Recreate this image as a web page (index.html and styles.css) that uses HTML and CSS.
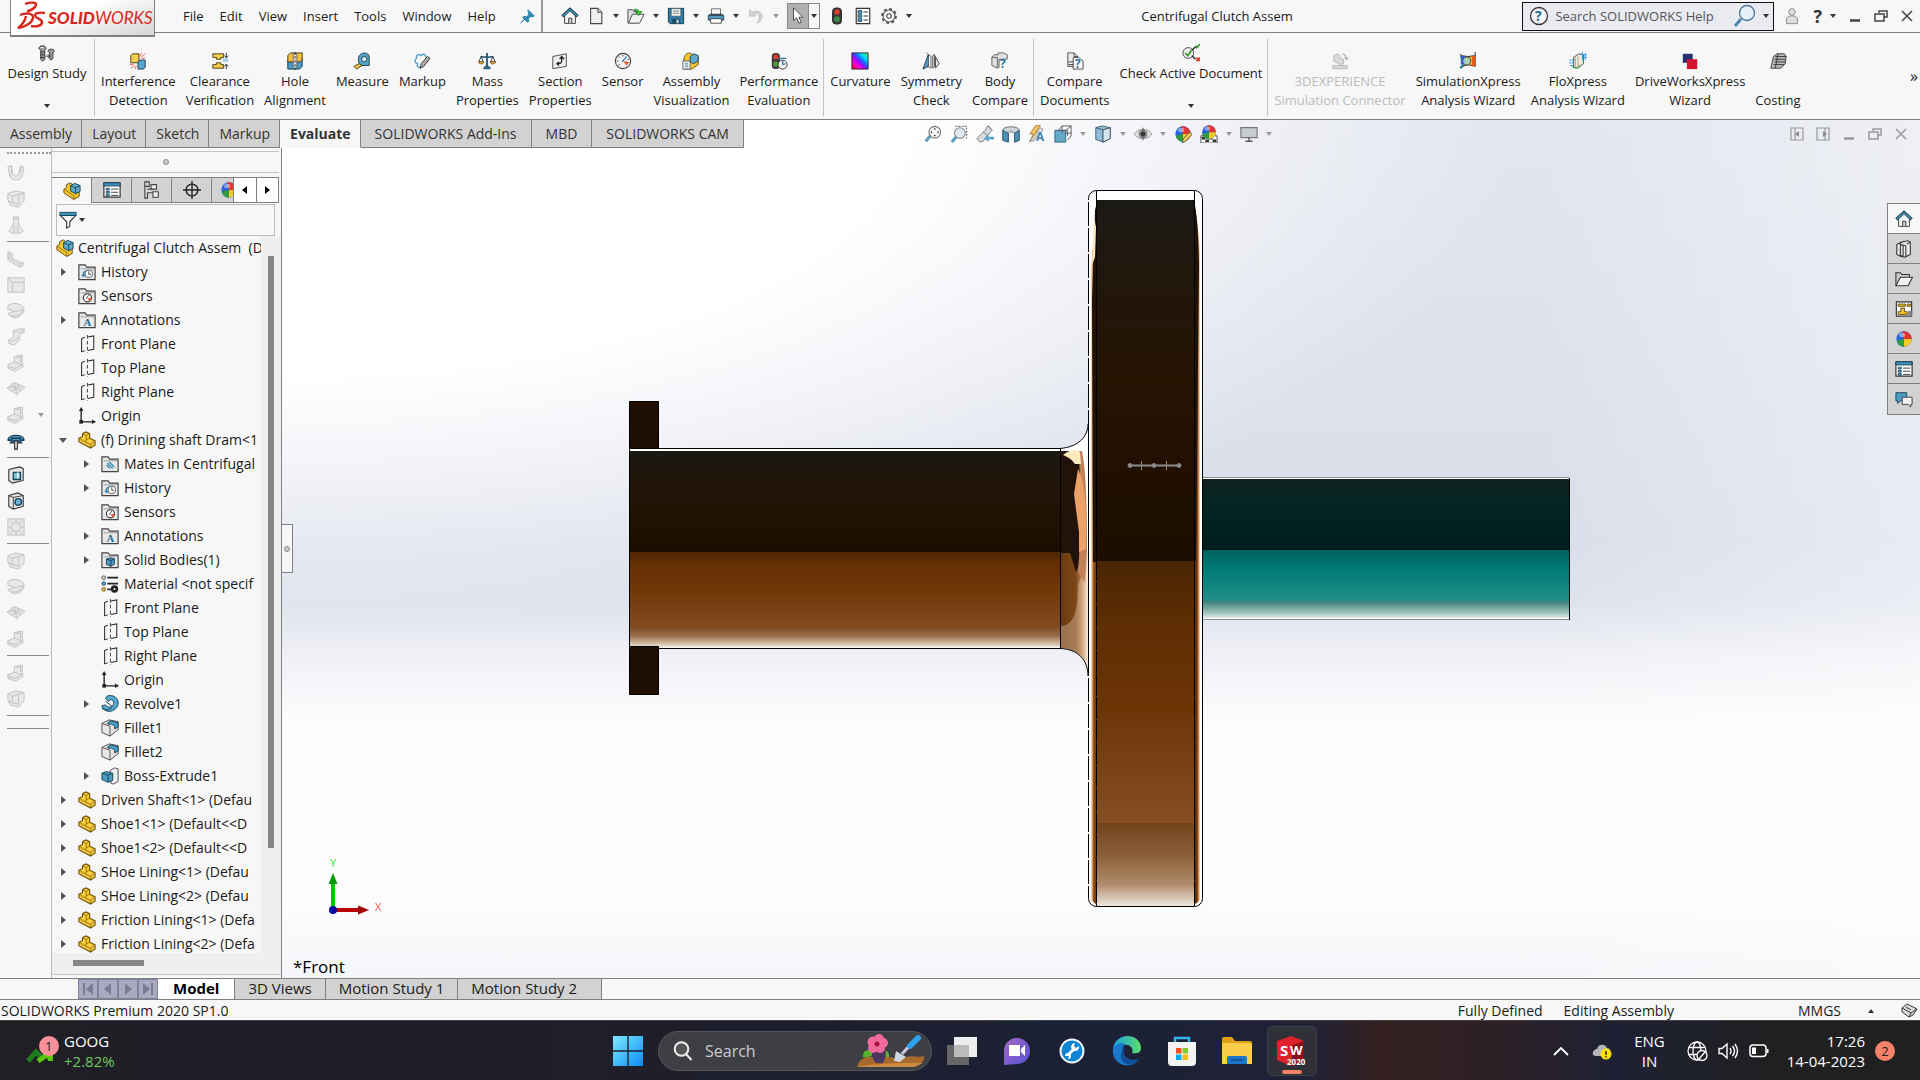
FILE: index.html
```html
<!DOCTYPE html>
<html lang="en">
<head>
    <meta charset="UTF-8">
    <title>Centrifugal Clutch Assem</title>
    <link rel="stylesheet" href="styles.css">
</head>
<body>
<!-- icon sprite -->
<svg class="sprite" aria-hidden="true">
    <defs>
        <linearGradient id="shaft" x1="0" y1="0" x2="0" y2="1">
            <stop offset="0" stop-color="#1b1814"/><stop offset=".2" stop-color="#231507"/><stop offset=".515" stop-color="#1d0d00"/>
            <stop offset=".515" stop-color="#502804"/><stop offset=".58" stop-color="#663004"/><stop offset=".7" stop-color="#703808"/><stop offset=".886" stop-color="#804a1d"/>
            <stop offset=".886" stop-color="#784820"/><stop offset=".94" stop-color="#9a6f4c"/><stop offset=".99" stop-color="#e8d8c8"/><stop offset="1" stop-color="#fff"/>
        </linearGradient>
        <linearGradient id="drum" x1="0" y1="0" x2="0" y2="1">
            <stop offset="0" stop-color="#1a1916"/><stop offset=".1" stop-color="#21170c"/><stop offset=".25" stop-color="#261403"/><stop offset=".512" stop-color="#1c0d00"/>
            <stop offset=".512" stop-color="#4a2605"/><stop offset=".6" stop-color="#5e2d03"/><stop offset=".72" stop-color="#6c3506"/><stop offset=".883" stop-color="#854f23"/>
            <stop offset=".883" stop-color="#71441c"/><stop offset=".93" stop-color="#8c6039"/><stop offset=".97" stop-color="#b08d6d"/><stop offset="1" stop-color="#f0e8df"/>
        </linearGradient>
        <linearGradient id="teal" x1="0" y1="0" x2="0" y2="1">
            <stop offset="0" stop-color="#10201f"/><stop offset=".15" stop-color="#032624"/><stop offset=".51" stop-color="#001d1d"/>
            <stop offset=".51" stop-color="#00625f"/><stop offset=".65" stop-color="#007a76"/><stop offset=".88" stop-color="#239088"/>
            <stop offset=".88" stop-color="#398078"/><stop offset=".96" stop-color="#9dc0ba"/><stop offset="1" stop-color="#dfe9e5"/>
        </linearGradient>
        <linearGradient id="rimL" x1="0" y1="0" x2="1" y2="0">
            <stop offset="0" stop-color="#fff"/><stop offset=".2" stop-color="#fff"/><stop offset=".4" stop-color="#e9a56c"/><stop offset=".6" stop-color="#8a4e1e"/><stop offset="1" stop-color="#5e3008"/>
        </linearGradient>
        <linearGradient id="rimR" x1="1" y1="0" x2="0" y2="0">
            <stop offset="0" stop-color="#fff"/><stop offset=".2" stop-color="#fff"/><stop offset=".4" stop-color="#e99a5b"/><stop offset=".6" stop-color="#6a3a12"/><stop offset="1" stop-color="#4a2808"/>
        </linearGradient>
        <linearGradient id="neck" x1="0" y1="0" x2="1" y2="0">
            <stop offset="0" stop-color="#6b3a10"/><stop offset=".55" stop-color="#7d4718"/><stop offset=".8" stop-color="#c08d62"/><stop offset="1" stop-color="#fff4e6"/>
        </linearGradient>
        <linearGradient id="winBlue" x1="0" y1="0" x2="1" y2="1">
            <stop offset="0" stop-color="#7fe9ff"/><stop offset="1" stop-color="#0a8cf5"/>
        </linearGradient>
        <linearGradient id="chatG" x1="0" y1="0" x2="1" y2="1">
            <stop offset="0" stop-color="#a667c0"/><stop offset="1" stop-color="#5453d6"/>
        </linearGradient>
        <linearGradient id="edgeG" x1="0" y1="0" x2="1" y2="0">
            <stop offset="0" stop-color="#1c9ce4"/><stop offset="1" stop-color="#5be06a"/>
        </linearGradient>
        <linearGradient id="rainbow" x1="1" y1="0" x2="0" y2="1">
            <stop offset="0" stop-color="#5e4"/><stop offset=".25" stop-color="#0df"/><stop offset=".42" stop-color="#16f"/><stop offset=".58" stop-color="#a0f"/><stop offset=".75" stop-color="#f0c"/><stop offset="1" stop-color="#f00"/>
        </linearGradient>
    </defs>
    <symbol id="i-home" viewBox="0 0 20 20"><path d="M4 9v9.200h12V9l-6-5.500z" fill="#f4f4f4" stroke="#333"/><path d="M8.500 18v-5.500h3.500V18" fill="#ccc" stroke="#333"/><path d="M1.500 10.500L10 2.500l8.500 8" fill="none" stroke="#173b50" stroke-width="3.400"/><path d="M2 10L10 2.800l8 7.200" fill="none" stroke="#4b9cc4" stroke-width="1.400"/></symbol>
    <symbol id="i-new" viewBox="0 0 20 20"><path d="M4 1.500h8l4.500 4.500v12.500H4z" fill="#eee" stroke="#444" stroke-width="1.200"/><path d="M12 1.500V6h4.500" fill="#ccc" stroke="#444"/></symbol>
    <symbol id="i-open" viewBox="0 0 20 20"><path d="M1 17.500V3h5l1.500 2H11v12.500z" fill="#ddd" stroke="#444"/><path d="M1.500 18L6 8h13l-5 10z" fill="#f0f0f0" stroke="#444"/><path d="M8 2.500c3 0 5 .5 6 2.500h2.500L13 9.500 9.500 5.500H12C11 4.500 10 4 8 4z" fill="#3c3" stroke="#176a17" stroke-width=".7"/></symbol>
    <symbol id="i-save" viewBox="0 0 20 20"><path d="M1.500 1.500h17v17h-15l-2-2z" fill="#2d7ba5" stroke="#15384c"/><path d="M5 2h10v8H5z" fill="#f4f4f4" stroke="#777" stroke-width=".6"/><path d="M6.500 4.500h7M6.500 7h7" stroke="#777"/><path d="M6 13h8v5.500H6z" fill="#1c4963"/><path d="M10.500 14h2.500v4h-2.500z" fill="#ccc"/></symbol>
    <symbol id="i-print" viewBox="0 0 20 20"><path d="M5 2h10v7H5z" fill="#f6f6f6" stroke="#666"/><path d="M1.500 9h17v5.500h-17z" fill="#4f9ac0" stroke="#1b3b4d"/><path d="M3 7.500h14v2H3z" fill="#3b4347"/><path d="M4 13h12v5H4z" fill="#fff" stroke="#444"/></symbol>
    <symbol id="i-undo" viewBox="0 0 20 20"><path d="M3 3v7h7L7.500 7.500c4-1.500 7 .5 6 6-.3 1.500-.8 3-2.500 4.500 5-2.500 7-7 5-10.500-2-3-6.500-3.500-10.500-1.500z" fill="#d4d4d4" stroke="#bbb"/></symbol>
    <symbol id="i-cursor" viewBox="0 0 20 20"><path d="M5 1v14l3.500-3 2.500 6 2.500-1.200-2.500-5.500h4.500z" fill="#fff" stroke="#444"/></symbol>
    <symbol id="i-light" viewBox="0 0 20 20"><rect x="5" y="1" width="10" height="18" rx="4" fill="#3a3a3a" stroke="#222"/><circle cx="10" cy="5.500" r="3" fill="#e43a2c"/><circle cx="10" cy="13.500" r="3.200" fill="#3a8c3f"/></symbol>
    <symbol id="i-list" viewBox="0 0 20 20"><path d="M2.500 1.500h15v17h-15z" fill="#fff" stroke="#333" stroke-width="1.300"/><path d="M4.500 4h4v3h-4zM4.500 8.500h4v3h-4zM4.500 13h4v3h-4z" fill="#4b9cc4" stroke="#174056" stroke-width=".9"/><path d="M10.500 5.500h5M10.500 10h5M10.500 14.500h5" stroke="#333" stroke-width="1.200"/></symbol>
    <symbol id="i-gear" viewBox="0 0 20 20"><circle cx="10" cy="10" r="7.800" fill="none" stroke="#555" stroke-width="2" stroke-dasharray="3.200 2.926"/><circle cx="10" cy="10" r="6.600" fill="#f7f7f7" stroke="#555" stroke-width="1.200"/><circle cx="10" cy="10" r="2.500" fill="#fff" stroke="#444" stroke-width="1.200"/></symbol>
    <symbol id="i-pin" viewBox="0 0 20 20"><path d="M10 3l7 7-2 1-2-.5-2.500 2.500.5 3-1.500 1L4 11.500l1.500-1 3 .3L11 8l-.8-2.500zM6 13.500L2 18z" fill="#2f86b3" stroke="#2f86b3"/></symbol>
    <symbol id="i-study" viewBox="0 0 20 20"><path d="M1 5c0-4 8-4 8 0L7.500 7v10L5 19l-2-2V7zM11 8c0-3 7-3 7 0l-1.500 2v6l-2 2-1.500-2v-6z" fill="#9a9a9a" stroke="#2d2d2d"/><path d="M3 9h4M3 12h4M3 15h4M8.500 13.500h4M11 11.500l2 2-2 2" stroke="#2d2d2d" fill="none"/><path d="M3 4h3" stroke="#fff"/></symbol>
    <symbol id="i-interf" viewBox="0 0 20 20"><path d="M2 4l2-2h7v8l-2 2H2z" fill="#f5cf4c" stroke="#3f3310"/><path d="M10 11l2-2h6v8l-2 2h-6z" fill="#58a6d0" stroke="#15384c"/><path d="M12 5l2-4M13 6l5-4M14 7.500l4-1M1 14l4-.5M2 18l4-3M7 19l1-4" stroke="#f0563b"/></symbol>
    <symbol id="i-clear" viewBox="0 0 20 20"><path d="M2 2h12v4h-3v2H6V6H2zM2 18h12v-4h-3v-2H6v2H2z" fill="#f5cf4c" stroke="#3f3310"/><path d="M13 10h6M13 8h6" stroke="#58a6d0"/><path d="M17 1v5M15 4l2 2.500L19 4M17 19v-5M15 16l2-2.500 2 2.500" stroke="#222" fill="none"/></symbol>
    <symbol id="i-hole" viewBox="0 0 20 20"><path d="M2 9l3-2h13v9l-3 3H2z" fill="#4a9bc5" stroke="#15384c"/><path d="M2 4l3-3h13v8l-3 2H2z" fill="#f2c23c" stroke="#3f3310"/><path d="M8 2h4v16H8z" fill="#eee" stroke="#444" stroke-width=".8"/><path d="M10 0v20" stroke="#222" stroke-dasharray="3 1.500"/></symbol>
    <symbol id="i-tape" viewBox="0 0 20 20"><path d="M7 4c3-4 10-4 11 1v10H9c-3-2-4-7-2-11z" fill="#59a3c8" stroke="#15384c"/><circle cx="12.500" cy="8" r="3" fill="#d6e7ef" stroke="#15384c"/><path d="M1 16l6-3 3 2-6 4z" fill="#f3c740" stroke="#3f3310"/></symbol>
    <symbol id="i-markup" viewBox="0 0 20 20"><path d="M9 17c-3 1-5-1-4-4-3-1-4-4-1-6-1-4 3-5 5-3 2-3 6-1 5 2" fill="none" stroke="#4a9bc5" stroke-width="1.500"/><path d="M8 18l1-5 7-8 3 2-7 9z" fill="#aaa" stroke="#333"/></symbol>
    <symbol id="i-mass" viewBox="0 0 20 20"><path d="M10 1v15M3 5c4 1 10 1 14 0" stroke="#1d5674" stroke-width="2" fill="none"/><path d="M3.500 5L1 11h5zM16.500 5L14 11h5z" fill="none" stroke="#333"/><path d="M.5 11h6c0 3-6 3-6 0zM13.500 11h6c0 3-6 3-6 0z" fill="#f3b73e" stroke="#5a3f10" stroke-width=".7"/><path d="M6.500 18.500h7c0-4-7-4-7 0z" fill="#2b7ba5" stroke="#15384c"/></symbol>
    <symbol id="i-section" viewBox="0 0 20 20"><path d="M2 5l15-3v14L2 18.500z" fill="#eee" stroke="#444"/><path d="M7 13c5 0 5-1 5-7M9.500 8L12 5l2.500 3M9 11l-2.500 2L9 15" stroke="#222" fill="none" stroke-width="1.400"/></symbol>
    <symbol id="i-sensor" viewBox="0 0 20 20"><circle cx="10" cy="10" r="8.500" fill="#f4f4f4" stroke="#444" stroke-width="1.200"/><path d="M10 3v2M3 10h2M5 5l1.500 1.500M5 15l1.500-1.500M17 8l-2 .5" stroke="#444"/><path d="M9 11l5-6" stroke="#3a8fbb" stroke-width="1.600"/><path d="M10 10l7 1-3 4z" fill="#e53"/></symbol>
    <symbol id="i-asm" viewBox="0 0 20 20"><path d="M1 8l3-2V3l4-2 3 2v6l7 2v5l-6 3.500L1 12z" fill="#f5c72f" stroke="#5c4609"/><path d="M1 8l11 7v4" fill="none" stroke="#8a6a10"/><path d="M8.500 4l4.500-2.500L19 4v6.500L14 13l-5.500-3z" fill="#5fa9cf" stroke="#163f55"/><path d="M8.500 4L14 6.500 19 4M14 6.500V13" fill="none" stroke="#163f55"/></symbol>
    <symbol id="i-part" viewBox="0 0 20 20"><path d="M1 8l4-2V3l4-2 4 2v5l6 3v4.500l-5 3.500L1 12z" fill="#f7ce3c" stroke="#6b500b" stroke-width="1.200"/><path d="M1.500 8.500L9 12.500l5 2.500 4.500-3.500M14 15v4M5 3.200L9 5l4-2M9 5v5l4-2M9 10v2" fill="none" stroke="#8f6d12"/></symbol>
    <symbol id="i-asmvis" viewBox="0 0 20 20"><path d="M3 5c1-4 7-5 9-2l6 3v8l-7 5H2V8z" fill="#f5c72f" stroke="#5c4609"/><path d="M9 5l4-3 5 2v6l-5 3-4-2z" fill="#5fa9cf" stroke="#163f55"/><path d="M1 10h8v9H1z" fill="#fff" stroke="#555"/><path d="M3 12.500h4M3 14.500h4M3 16.500h4" stroke="#47a"/></symbol>
    <symbol id="i-perf" viewBox="0 0 20 20"><rect x="2" y="1" width="9" height="18" rx="4" fill="#3a3a3a"/><circle cx="6.500" cy="5.500" r="2.800" fill="#e43a2c"/><circle cx="6.500" cy="13.500" r="3" fill="#4d9b3f"/><circle cx="14" cy="14" r="5" fill="#f2f2f2" stroke="#333"/><path d="M14 14V9.500M14 14l3-1M9 7h9" stroke="#2b7ba5" stroke-width="1.400"/></symbol>
    <symbol id="i-curv" viewBox="0 0 20 20"><path d="M1 1h18v18H1z" fill="url(#rainbow)" stroke="#222"/></symbol>
    <symbol id="i-symm" viewBox="0 0 20 20"><path d="M1 19L7 3v13z" fill="#58a6d0" stroke="#15384c"/><path d="M5 1l5 4v13l-5-3" fill="none" stroke="#555"/><path d="M12 4v14l2-2V3zM15 5l4 8-4 5z" fill="#e4e4e4" stroke="#444"/></symbol>
    <symbol id="i-check" viewBox="0 0 20 20"><circle cx="7" cy="10" r="6" fill="#eee" stroke="#444"/><path d="M3.500 10l3 3 4-6M15 2l1.500 2L20 0" stroke="#2c9b22" stroke-width="1.800" fill="none"/><path d="M11 7l4-4M11 13l4 4" stroke="#222" stroke-width="1.500"/><path d="M16 15l4 4M20 15l-4 4" stroke="#d8301e" stroke-width="1.800"/></symbol>
    <symbol id="i-3dx" viewBox="0 0 20 20"><path d="M2 15h16v3.500H2zM3 4l4-2 3 2v3l4 1v5l-4 1-7-4z" fill="#d9d9d9" stroke="#b9b9b9"/><path d="M12 2c4 0 5 2 5 6M15 6l2 2.500L19 6" fill="none" stroke="#b9b9b9" stroke-width="1.500"/></symbol>
    <symbol id="i-simx" viewBox="0 0 20 20"><path d="M2 4l8 1 8-1v12l-8-2-6 2z" fill="#ffd21c" stroke="#222"/><path d="M14 5l4-1v12l-4-1c1-4 0-7 0-10z" fill="#e95b16"/><path d="M2 4l6 1-2 8-4 1z" fill="#285fe0"/><circle cx="8.500" cy="10" r="4.500" fill="#a5d4c8" fill-opacity=".85" stroke="#555" stroke-width="1.300"/><path d="M5 14l-3.500 4" stroke="#2b7ba5" stroke-width="2.600"/><path d="M18 0v4M1 2l2 2" stroke="#222"/></symbol>
    <symbol id="i-flo" viewBox="0 0 20 20"><path d="M5 6l6-4 5 1v10l-6 5-5-1z" fill="#e5efe4" stroke="#444"/><path d="M7 6v11M10 4v12" stroke="#f07a63"/><path d="M0 9h7M0 12h6M1 15h5M13 3h7M14 6h6M15 0v9M18 1v8" stroke="#3aa0e6" stroke-width="1.100"/><path d="M3 16c3 3 7 2 9-2" stroke="#3b3" fill="none"/></symbol>
    <symbol id="i-drive" viewBox="0 0 20 20"><path d="M2 2h11v10H2z" fill="#24316e"/><path d="M6.500 8H18v11H6.500z" fill="#d5142f"/></symbol>
    <symbol id="i-cost" viewBox="0 0 20 20"><path d="M2 18L5 5l4-3h8l2 3-1 8-5 5z" fill="#bbb" stroke="#333"/><path d="M7 5h12M6 8h12M6 11h12M5 14h12M10 2L7 18" stroke="#333" fill="none"/></symbol>
    <symbol id="i-zoomfit" viewBox="0 0 20 20"><path d="M7 12l-5 6" stroke="#5f9dbd" stroke-width="3.400"/><circle cx="12" cy="8" r="6.500" fill="#f4f6f8" stroke="#777" stroke-width="1.200"/><path d="M12 3l1.500 2h-3zM12 13l1.500-2h-3zM7 8l2-1.500v3zM17 8l-2-1.500v3z" fill="#444"/></symbol>
    <symbol id="i-zoomarea" viewBox="0 0 20 20"><path d="M7 13l-5 6" stroke="#5f9dbd" stroke-width="3.400"/><path d="M6 1.500h12.500V15" fill="none" stroke="#444" stroke-dasharray="2 1.500"/><circle cx="11" cy="9" r="6" fill="#dfe8ee" stroke="#888" stroke-width="1.200"/></symbol>
    <symbol id="i-prev" viewBox="0 0 20 20"><path d="M1 15L10 6l3-5 2 1 3 4-4 4-6 8-4 1z" fill="#d8dadd" stroke="#777"/><path d="M13 1l5 5M8 8l5 4" stroke="#777"/><path d="M20 13h-6v-3l-5 5 5 4v-3h6z" fill="#5ba3c8"/></symbol>
    <symbol id="i-cut" viewBox="0 0 20 20"><path d="M1 5c2-4 16-4 18 0v12l-5 2V9c-2-2-6-2-7 0v10l-6-2z" fill="#cfd4d8" stroke="#666"/><path d="M1 6l6 3v10l-6-2zM19 6l-5 3v10l5-2z" fill="#4c93b6" stroke="#2a5871"/></symbol>
    <symbol id="i-orient" viewBox="0 0 20 20"><path d="M5 6l4-5h10v11l-4 5" fill="none" stroke="#555"/><path d="M1 6h12v13H1z" fill="#67a7c7" stroke="#2f617c"/><path d="M9 1v8M5 6h10v6M19 1l-6 5M12 9h7" stroke="#555" fill="none"/></symbol>
    <symbol id="i-cube" viewBox="0 0 20 20"><path d="M2 3l7-2 9 2v12l-8 4-8-3z" fill="#8fc0d9" stroke="#456"/><path d="M2 3l8 2.500v13.500M10 5.500L18 3" fill="none" stroke="#456"/><path d="M10 5.500L18 3v12l-8 4z" fill="#d6e6ee" stroke="#456"/></symbol>
    <symbol id="i-eye" viewBox="0 0 20 20"><path d="M0 10c5-7 15-7 20 0-5 7-15 7-20 0z" fill="#e2e2e2" stroke="#999"/><circle cx="10" cy="10" r="5" fill="#888"/><circle cx="10" cy="10" r="2.500" fill="#222"/><path d="M10 3v14" stroke="#555"/></symbol>
    <symbol id="i-ball" viewBox="0 0 20 20"><circle cx="10" cy="10" r="8.500" fill="#2a63d8"/><path d="M10 10L8 1.700A8.500 8.500 0 0 1 18.500 10z" fill="#e2332c"/><path d="M10 10h8.500A8.500 8.500 0 0 1 10 18.500z" fill="#f3c928"/><path d="M10 10v8.500A8.500 8.500 0 0 1 2 12z" fill="#2c9d3c"/><ellipse cx="8" cy="5.500" rx="3.500" ry="2.500" fill="#fff" opacity=".45"/></symbol>
    <symbol id="i-ballpen" viewBox="0 0 20 20"><use href="#i-ball"/><path d="M9 20l1.500-5L17 8l3 2.500-7 7.500z" fill="#f4c95a" stroke="#555"/></symbol>
    <symbol id="i-scene" viewBox="0 0 20 20"><path d="M1 12h18v8H1z" fill="#fff" stroke="#444"/><path d="M2 13h4v3H2zM10 13h4v3h-4zM6 16h4v3H6zM14 16h4v3h-4z" fill="#333"/><g transform="translate(1 -1) scale(.9)"><use href="#i-ball" width="20" height="20"/></g></symbol>
    <symbol id="i-monitor" viewBox="0 0 20 20"><path d="M1 3h18v11H1z" fill="#c9ccd0" stroke="#777" stroke-width="1.300"/><path d="M10 14v4M6 18h8" stroke="#555" stroke-width="1.500"/></symbol>
    <symbol id="i-folder" viewBox="0 0 20 20"><path d="M1 18.500V2h7l1.500 2.500H19v14z" fill="#e9e9e9" stroke="#444" stroke-width="1.300"/><path d="M3 6.500h16" stroke="#999"/></symbol>
    <symbol id="i-history" viewBox="0 0 20 20"><use href="#i-folder"/><circle cx="12" cy="12" r="4.300" fill="#fff" stroke="#555"/><path d="M12 9v3.500h2.500" fill="none" stroke="#333"/><path d="M3.500 13l2.500 3 2.500-3H7c0-3 1-4 3-5-3 0-5 2-5 5z" fill="#2b82af"/></symbol>
    <symbol id="i-sens" viewBox="0 0 20 20"><use href="#i-folder"/><circle cx="10.500" cy="12" r="4.500" fill="#fff" stroke="#333" stroke-width="1.200"/><path d="M9 13l3-4" stroke="#333"/><path d="M10.500 12.500l4.500-.5-2 4z" fill="#e53"/></symbol>
    <symbol id="i-mates" viewBox="0 0 20 20"><use href="#i-folder"/><path d="M7 9l6 6M9 7.500l6 6M6 11l4 4" stroke="#3b8db5" stroke-width="1.500"/></symbol>
    <symbol id="i-solid" viewBox="0 0 20 20"><use href="#i-folder"/><path d="M6 9l5-1.500L15 9v5.500L11 17l-5-2z" fill="#4b9cc4" stroke="#163f55"/><path d="M6 9l5 1.500L15 9M11 10.500V17" fill="none" stroke="#163f55"/></symbol>
    <symbol id="i-plane" viewBox="0 0 20 20"><path d="M7.500 2.500L4 4v14.500l3.500-1M10.500 2.200L17.500 1v15L11 17.300" fill="none" stroke="#333" stroke-width="1.200"/><path d="M10.500 0v20" stroke="#333" stroke-dasharray="4 2.500"/></symbol>
    <symbol id="i-origin" viewBox="0 0 20 20"><path d="M3.500 2v14.500H19" fill="none" stroke="#222" stroke-width="1.500"/><path d="M1 4.500L3.500 0 6 4.500zM15.500 14l4.500 2.500-4.500 2.500z" fill="#222"/><path d="M1.500 14.500h4v4h-4z" fill="#222"/></symbol>
    <symbol id="i-material" viewBox="0 0 20 20"><circle cx="3" cy="3" r="2" fill="#ddd" stroke="#444"/><circle cx="3" cy="9.500" r="2" fill="#58a6d0" stroke="#246"/><circle cx="3" cy="16" r="2" fill="#f6c82e" stroke="#642"/><path d="M7 3h12M7 9.500h12M7 16h4" stroke="#222" stroke-width="2"/><circle cx="15" cy="15.500" r="2.600" fill="none" stroke="#222" stroke-width="3"/></symbol>
    <symbol id="i-revolve" viewBox="0 0 20 20"><path d="M7 1c7-2 13 3 12 9-1 6-7 9-12 8-4-1-6-4-6-6l4-1c2 3 6 3 8 1 2-3 1-6-2-7L8 7 5 4z" fill="#58a6d0" stroke="#163f55"/><path d="M5 7l8 6M1 15c4 2 8 2 11-1" stroke="#163f55" fill="none"/></symbol>
    <symbol id="i-fillet" viewBox="0 0 20 20"><path d="M1 5l8-4 10 2v9l-9 7-9-4z" fill="#e8e8e8" stroke="#444"/><path d="M1 5l9 3v11" fill="none" stroke="#444"/><path d="M10 2l9 2v5l-4 2c1-3-2-6-6-5L7 5z" fill="#4b9cc4" stroke="#163f55"/></symbol>
    <symbol id="i-boss" viewBox="0 0 20 20"><path d="M10 4l5-3 4 1v14l-5 3-3-1z" fill="#eee" stroke="#444"/><path d="M1 7l5-2 7 2v8l-5 2-7-3z" fill="#4b9cc4" stroke="#163f55"/><path d="M1 7l7 2v8M8 9l5-2" fill="none" stroke="#163f55"/></symbol>
    <symbol id="i-prop" viewBox="0 0 20 20"><path d="M1 2h18v16H1z" fill="#fff" stroke="#333" stroke-width="1.300"/><path d="M1 2h18v3.500H1z" fill="#3d94be" stroke="#163f55"/><path d="M3.500 8h3.500v2H3.500zM3.500 11.500h3.500v2H3.500zM3.500 15h3.500v2H3.500z" fill="#4b9cc4" stroke="#163f55" stroke-width=".8"/><path d="M9 9h8M9 12.500h8M9 16h8" stroke="#333"/></symbol>
    <symbol id="i-config" viewBox="0 0 20 20"><path d="M2 1h5v5H2zM2 6v13h3v-6h6M5 9h6" fill="none" stroke="#444" stroke-width="1.200"/><path d="M9 4h6v5H9zM11 12h6v6h-6z" fill="#eee" stroke="#444" stroke-width="1.200"/></symbol>
    <symbol id="i-target" viewBox="0 0 20 20"><circle cx="10" cy="10" r="6.500" fill="none" stroke="#222" stroke-width="1.600"/><path d="M10 0v20M0 10h20" stroke="#222" stroke-width="1.500"/></symbol>
    <symbol id="i-filter" viewBox="0 0 20 20"><path d="M1.500 5h17l-6.500 7v5l-3.500 2v-7z" fill="#f4f4f4" stroke="#333" stroke-width="1.200"/><path d="M1 1.500h18v3.500H1z" fill="#3d94be" stroke="#163f55"/></symbol>
    <symbol id="i-books" viewBox="0 0 20 20"><path d="M2 5l4-2v14l3 1.500M6 3l4-1.500M10 2l4-1.200 3 1.200v14l-6 3-5-1M2 5v11l4 2M6 5l3 1v12.500M9 5.500l3 1v12.500M13 4.500l4-2" fill="#eee" stroke="#333" stroke-width="1.200"/></symbol>
    <symbol id="i-folder2" viewBox="0 0 20 20"><path d="M1 17V3h5l1.500 2H16v3" fill="#ccc" stroke="#333" stroke-width="1.200"/><path d="M1 17.500L6 8h13.500l-5 9.500z" fill="#f0f0f0" stroke="#333" stroke-width="1.200"/></symbol>
    <symbol id="i-palette" viewBox="0 0 20 20"><path d="M1.500 2h17v16h-17z" fill="#fff" stroke="#333" stroke-width="1.300"/><path d="M3.500 4.500h8v2.500h-8zM13.500 4.500H17V7h-3.500zM6.500 9h4v4h3v3H3.500v-3h3z" fill="#f6c82e" stroke="#5c4609"/><path d="M14.500 12h4v6h-4z" fill="#888"/></symbol>
    <symbol id="i-forum" viewBox="0 0 20 20"><path d="M1 3h12v9H6l-3 3v-3H1z" fill="#4b9cc4" stroke="#163f55"/><path d="M8 8h11v8h-1.500v3L14.500 16H8z" fill="#f2f2f2" stroke="#333"/></symbol>
    <!-- greyed command icons -->
    <symbol id="g-u" viewBox="0 0 20 20"><path d="M1 3l4-1 1 8c1 4 6 4 7 1l2-9 4 2-2 9c-2 6-11 7-14 0z"/><path d="M5 2v8M15 2v8M5 11l-2 3" /></symbol>
    <symbol id="g-box" viewBox="0 0 20 20"><path d="M1 4l9-3 9 2v9l-6 7-9-2-3-6z"/><path d="M1 4l5 3 13-4M6 7v7l7 2V6M1 12l5 2"/></symbol>
    <symbol id="g-cone" viewBox="0 0 20 20"><path d="M7 1h6v9l5 7-4 2H6l-4-2 5-7z"/><path d="M7 3h6M8 10v8M12 10v8"/></symbol>
    <symbol id="g-bend" viewBox="0 0 20 20"><path d="M1 2l5 2v6l12 4v3l-4 2L1 11z"/><path d="M1 8l13 7 4-1M14 15v4M3 3v6"/></symbol>
    <symbol id="g-sq" viewBox="0 0 20 20"><path d="M1 2h18v16H1z"/><path d="M1 2l5 5h13M6 7v11"/></symbol>
    <symbol id="g-disc" viewBox="0 0 20 20"><path d="M1 4c5-4 14-3 18 3 0 7-7 12-13 10l-5-4 8-3-8-2z"/><path d="M2 8c5 3 10 3 16 0M4 15c6 2 12-1 14-6"/></symbol>
    <symbol id="g-z" viewBox="0 0 20 20"><path d="M7 3l6-2h6v4l-5 2v6l-6 6-6-2v-4l5-2z"/><path d="M7 3l6 2 6-3M2 13l5 2 6-5"/></symbol>
    <symbol id="g-mesh" viewBox="0 0 20 20"><path d="M0 9l8-6 12 5-9 8z"/><path d="M0 9l14-3M8 3l3 13M5 12L16 7M4 6l11 6"/></symbol>
    <symbol id="g-grid" viewBox="0 0 20 20"><path d="M1 1h18v18H1z"/><path d="M10 1v18M1 10h18M3 3l14 14M17 3L3 17"/><circle cx="10" cy="10" r="5"/></symbol>
    <symbol id="g-hem" viewBox="0 0 20 20"><path d="M1 12l7-3V3l9-2v10l1 3-9 5-8-3z"/><path d="M1 14l8 2 9-5M8 9l9 3M10 4l5-1v6"/></symbol>
</svg>

<header class="titlebar">
    <div class="logo">
        <svg width="30" height="30" viewBox="0 0 30 30" fill="none" stroke="#d8281e" stroke-width="2.400">
            <path d="M9 4C14 2 21 2 20 5C19 8 16 10 11 11.500"/>
            <path d="M4 15C10 12.500 18 13 17 18C16 23 9 27 2 28C6 25 9 21 10 16"/>
            <path d="M29 13C22 12 18 13 19.500 16.500C21 19 27 19 26 23C25 26 20 27 15 26"/>
        </svg>
        <span><b>SOLID</b>WORKS</span>
    </div>
    <nav class="menu">
        <a href="#">File</a><a href="#">Edit</a><a href="#">View</a><a href="#">Insert</a><a href="#">Tools</a><a href="#">Window</a><a href="#">Help</a>
    </nav>
    <svg class="ic pin"><use href="#i-pin"/></svg>
    <div class="quick">
        <button aria-label="Home"><svg class="ic"><use href="#i-home"/></svg></button>
        <button aria-label="New"><svg class="ic"><use href="#i-new"/></svg><i class="caret"></i></button>
        <button aria-label="Open"><svg class="ic"><use href="#i-open"/></svg><i class="caret"></i></button>
        <button aria-label="Save"><svg class="ic"><use href="#i-save"/></svg><i class="caret"></i></button>
        <button aria-label="Print"><svg class="ic"><use href="#i-print"/></svg><i class="caret"></i></button>
        <button aria-label="Undo"><svg class="ic"><use href="#i-undo"/></svg><i class="caret dim"></i></button>
        <button class="select" aria-label="Select"><span><svg class="ic"><use href="#i-cursor"/></svg></span><i class="caret"></i></button>
        <button aria-label="Rebuild"><svg class="ic"><use href="#i-light"/></svg></button>
        <button aria-label="File properties"><svg class="ic"><use href="#i-list"/></svg></button>
        <button aria-label="Options"><svg class="ic"><use href="#i-gear"/></svg><i class="caret"></i></button>
    </div>
    <h1>Centrifugal Clutch Assem</h1>
    <label class="help-search">
        <svg width="20" height="20" viewBox="0 0 20 20"><circle cx="10" cy="10" r="8.500" fill="#f4f4f6" stroke="#333" stroke-width="1.300"/><text x="6" y="15" font-size="14" font-weight="700" fill="#1f6a92">?</text></svg>
        <input type="text" placeholder="Search SOLIDWORKS Help" aria-label="Search SOLIDWORKS Help">
        <svg width="24" height="24" viewBox="0 0 24 24"><path d="M8 15l-6 7" stroke="#4c88b0" stroke-width="3"/><circle cx="14" cy="9" r="7.500" fill="#e8f1f9" stroke="#49799b" stroke-width="1.300"/></svg>
        <i class="caret"></i>
    </label>
    <div class="winctl">
        <button aria-label="Account"><svg class="ic" viewBox="0 0 20 20"><circle cx="10" cy="5.500" r="3.700" fill="#ddd" stroke="#888"/><path d="M4 18.500v-5c0-5 12-5 12 0v5z" fill="#ddd" stroke="#888"/></svg></button>
        <button class="q" aria-label="Help">?<i class="caret"></i></button>
        <button aria-label="Minimize"><svg class="ws" viewBox="0 0 14 14"><path d="M2 11.500h10" stroke="#444" stroke-width="2.500"/></svg></button>
        <button aria-label="Restore"><svg class="ws" viewBox="0 0 14 14"><path d="M5 4V2h8v6h-3M1 5h9v7H1z" fill="none" stroke="#444" stroke-width="1.500"/></svg></button>
        <button aria-label="Close"><svg class="ws" viewBox="0 0 14 14"><path d="M2 2l10 10M12 2L2 12" stroke="#444" stroke-width="1.500"/></svg></button>
    </div>
</header>

<!-- command manager -->
<div class="ribbon">
    <button class="cmd top wide"><svg class="ic"><use href="#i-study"/></svg><span>Design Study</span><i class="caret"></i></button>
    <i class="sep"></i>
    <button class="cmd"><svg class="ic"><use href="#i-interf"/></svg><span>Interference<br>Detection</span></button>
    <button class="cmd"><svg class="ic"><use href="#i-clear"/></svg><span>Clearance<br>Verification</span></button>
    <button class="cmd"><svg class="ic"><use href="#i-hole"/></svg><span>Hole<br>Alignment</span></button>
    <button class="cmd"><svg class="ic"><use href="#i-tape"/></svg><span>Measure</span></button>
    <button class="cmd"><svg class="ic"><use href="#i-markup"/></svg><span>Markup</span></button>
    <button class="cmd"><svg class="ic"><use href="#i-mass"/></svg><span>Mass<br>Properties</span></button>
    <button class="cmd"><svg class="ic"><use href="#i-section"/></svg><span>Section<br>Properties</span></button>
    <button class="cmd"><svg class="ic"><use href="#i-sensor"/></svg><span>Sensor</span></button>
    <button class="cmd"><svg class="ic"><use href="#i-asmvis"/></svg><span>Assembly<br>Visualization</span></button>
    <button class="cmd"><svg class="ic"><use href="#i-perf"/></svg><span>Performance<br>Evaluation</span></button>
    <i class="sep"></i>
    <button class="cmd"><svg class="ic"><use href="#i-curv"/></svg><span>Curvature</span></button>
    <button class="cmd"><svg class="ic"><use href="#i-symm"/></svg><span>Symmetry<br>Check</span></button>
    <button class="cmd"><svg class="ic" viewBox="0 0 20 20"><path d="M1 6l3-3h4V1h6l4 2v5H9v9l-2 1-6-3z" fill="#e2e2e2" stroke="#555"/><path d="M1 6h6v11" fill="none" stroke="#555"/><text x="10" y="18" font-size="13" font-weight="700" fill="#2176a5">?</text></svg><span>Body<br>Compare</span></button>
    <i class="sep"></i>
    <button class="cmd"><svg class="ic" viewBox="0 0 20 20"><path d="M2 1h7l4 4v11H2zM9 1v4h4" fill="#eee" stroke="#444"/><path d="M8 6h6l5 4v9H8z" fill="#f8f8f8" stroke="#444"/><path d="M3 11h5M3 14h5" stroke="#333"/><text x="10" y="18" font-size="13" font-weight="700" fill="#2176a5">?</text></svg><span>Compare<br>Documents</span></button>
    <button class="cmd top"><svg class="ic"><use href="#i-check"/></svg><span>Check Active Document</span><i class="caret"></i></button>
    <i class="sep"></i>
    <button class="cmd" disabled><svg class="ic"><use href="#i-3dx"/></svg><span>3DEXPERIENCE<br>Simulation Connector</span></button>
    <button class="cmd"><svg class="ic"><use href="#i-simx"/></svg><span>SimulationXpress<br>Analysis Wizard</span></button>
    <button class="cmd"><svg class="ic"><use href="#i-flo"/></svg><span>FloXpress<br>Analysis Wizard</span></button>
    <button class="cmd"><svg class="ic"><use href="#i-drive"/></svg><span>DriveWorksXpress<br>Wizard</span></button>
    <button class="cmd"><svg class="ic"><use href="#i-cost"/></svg><span><br>Costing</span></button>
    <button class="more" aria-label="More">»</button>
</div>

<main class="workspace">
    <div class="tabrow">
        <nav class="tabs">
            <a href="#">Assembly</a><a href="#">Layout</a><a href="#">Sketch</a><a href="#">Markup</a><a href="#" class="on">Evaluate</a><a href="#">SOLIDWORKS Add-Ins</a><a href="#">MBD</a><a href="#">SOLIDWORKS CAM</a>
        </nav>
        <div class="headsup">
            <svg class="ic"><use href="#i-zoomfit"/></svg>
            <svg class="ic"><use href="#i-zoomarea"/></svg>
            <svg class="ic"><use href="#i-prev"/></svg>
            <svg class="ic"><use href="#i-cut"/></svg>
            <svg class="ic" viewBox="0 0 20 20"><path d="M9 0L2 10h4l-4 9L13 8H9l5-8z" fill="#f4c45c" stroke="#a9762a"/><path d="M2 17L14 3l3 2L6 18z" fill="#d6d8da" fill-opacity=".7" stroke="#888"/><text x="9" y="18" font-size="13" font-weight="700" fill="#3a86ad">A</text></svg>
            <svg class="ic"><use href="#i-orient"/></svg><i class="caret dim"></i>
            <svg class="ic"><use href="#i-cube"/></svg><i class="caret dim"></i>
            <svg class="ic"><use href="#i-eye"/></svg><i class="caret dim"></i>
            <svg class="ic"><use href="#i-ballpen"/></svg>
            <svg class="ic"><use href="#i-scene"/></svg><i class="caret dim"></i>
            <svg class="ic"><use href="#i-monitor"/></svg><i class="caret dim"></i>
        </div>
        <div class="docctl">
            <svg class="ws" viewBox="0 0 14 14"><path d="M1 1h12v12H1zM5 1v12" fill="none" stroke="#999" stroke-width="1.200"/><path d="M5 7l4-3v6z" fill="#888"/></svg>
            <svg class="ws" viewBox="0 0 14 14"><path d="M1 1h12v12H1zM9 1v12" fill="none" stroke="#999" stroke-width="1.200"/><path d="M11 7L7 4v6z" fill="#888"/></svg>
            <svg class="ws" viewBox="0 0 14 14"><path d="M2 11.500h10" stroke="#999" stroke-width="2.500"/></svg>
            <svg class="ws" viewBox="0 0 14 14"><path d="M5 4V2h8v6h-3M1 5h9v7H1z" fill="none" stroke="#999" stroke-width="1.500"/></svg>
            <svg class="ws" viewBox="0 0 14 14"><path d="M2 2l10 10M12 2L2 12" stroke="#999" stroke-width="1.500"/></svg>
        </div>
    </div>

    <div class="stage">
        <aside class="sidebar">
            <i class="grip"></i>
            <svg class="ic grey"><use href="#g-u"/></svg>
            <svg class="ic grey"><use href="#g-box"/></svg>
            <svg class="ic grey"><use href="#g-cone"/></svg>
            <hr>
            <svg class="ic grey"><use href="#g-bend"/></svg>
            <svg class="ic grey"><use href="#g-sq"/></svg>
            <svg class="ic grey"><use href="#g-disc"/></svg>
            <svg class="ic grey"><use href="#g-z"/></svg>
            <svg class="ic grey"><use href="#g-hem"/></svg>
            <svg class="ic grey"><use href="#g-mesh"/></svg>
            <span class="withcaret"><svg class="ic grey"><use href="#g-hem"/></svg><i class="caret dim"></i></span>
            <svg class="ic" viewBox="0 0 20 20"><path d="M1 9C1 2 19 2 19 9l-4 1H5z" fill="#4b9cc4" stroke="#163f55" stroke-width="1.400"/><path d="M1 9h4v-2h10v2h4M3 12h5M12 12h5" stroke="#163f55" stroke-width="1.600" fill="none"/><path d="M8.500 10h3v9h-3z" fill="#eee" stroke="#222" stroke-width="1.200"/></svg>
            <hr>
            <svg class="ic" viewBox="0 0 20 20"><path d="M2 4l12-3 4 2v13l-12 3-4-3z" fill="#e6e6e6" stroke="#333" stroke-width="1.200"/><path d="M7 7h8v8H7z" fill="#7cc0e0" stroke="#163f55" stroke-width="1.400"/><path d="M12 7v7" stroke="#fff" stroke-width="1.500"/></svg>
            <svg class="ic" viewBox="0 0 20 20"><path d="M2 4l10-3 6 3v12l-11 3-5-3z" fill="#e6e6e6" stroke="#333" stroke-width="1.200"/><path d="M2 4l5 2v13M7 6l11-2" fill="none" stroke="#333"/><circle cx="12.500" cy="11" r="3.600" fill="#6db4d6" stroke="#163f55" stroke-width="1.500"/></svg>
            <svg class="ic grey"><use href="#g-grid"/></svg>
            <hr>
            <svg class="ic grey"><use href="#g-box"/></svg>
            <svg class="ic grey"><use href="#g-disc"/></svg>
            <svg class="ic grey"><use href="#g-mesh"/></svg>
            <svg class="ic grey"><use href="#g-hem"/></svg>
            <hr>
            <svg class="ic grey"><use href="#g-hem"/></svg>
            <svg class="ic grey"><use href="#g-box"/></svg>
            <hr>
            <hr>
        </aside>

        <!-- feature manager -->
        <aside class="panel">
            <div class="splitter"><i class="dot"></i></div>
            <div class="ptabs">
                <button class="on" aria-label="FeatureManager"><svg class="ic"><use href="#i-asm"/></svg></button>
                <button aria-label="PropertyManager"><svg class="ic"><use href="#i-prop"/></svg></button>
                <button aria-label="ConfigurationManager"><svg class="ic"><use href="#i-config"/></svg></button>
                <button aria-label="DimXpertManager"><svg class="ic"><use href="#i-target"/></svg></button>
                <button class="cut" aria-label="DisplayManager"><svg class="ic"><use href="#i-ball"/></svg></button>
                <button class="arrow" aria-label="Previous"><i class="caret left"></i></button>
                <button class="arrow" aria-label="Next"><i class="caret right"></i></button>
            </div>
            <label class="filter"><svg class="ic"><use href="#i-filter"/></svg><i class="caret"></i><input type="text" aria-label="Filter"></label>
            <div class="treebox">
                <ul class="tree">
                    <li class="root"><svg class="ic"><use href="#i-asm"/></svg>Centrifugal Clutch Assem&nbsp; (D</li>
                    <li class="more-in"><svg class="ic"><use href="#i-history"/></svg>History</li>
                    <li><svg class="ic"><use href="#i-sens"/></svg>Sensors</li>
                    <li class="more-in"><svg class="ic" viewBox="0 0 20 20"><use href="#i-folder"/><text class="a" x="6" y="17">A</text></svg>Annotations</li>
                    <li><svg class="ic"><use href="#i-plane"/></svg>Front Plane</li>
                    <li><svg class="ic"><use href="#i-plane"/></svg>Top Plane</li>
                    <li><svg class="ic"><use href="#i-plane"/></svg>Right Plane</li>
                    <li><svg class="ic"><use href="#i-origin"/></svg>Origin</li>
                    <li class="open"><svg class="ic"><use href="#i-part"/></svg>(f) Drining shaft Dram&lt;1</li>
                    <li class="sub more-in"><svg class="ic"><use href="#i-mates"/></svg>Mates in Centrifugal</li>
                    <li class="sub more-in"><svg class="ic"><use href="#i-history"/></svg>History</li>
                    <li class="sub"><svg class="ic"><use href="#i-sens"/></svg>Sensors</li>
                    <li class="sub more-in"><svg class="ic" viewBox="0 0 20 20"><use href="#i-folder"/><text class="a" x="6" y="17">A</text></svg>Annotations</li>
                    <li class="sub more-in"><svg class="ic"><use href="#i-solid"/></svg>Solid Bodies(1)</li>
                    <li class="sub"><svg class="ic"><use href="#i-material"/></svg>Material &lt;not specif</li>
                    <li class="sub"><svg class="ic"><use href="#i-plane"/></svg>Front Plane</li>
                    <li class="sub"><svg class="ic"><use href="#i-plane"/></svg>Top Plane</li>
                    <li class="sub"><svg class="ic"><use href="#i-plane"/></svg>Right Plane</li>
                    <li class="sub"><svg class="ic"><use href="#i-origin"/></svg>Origin</li>
                    <li class="sub more-in"><svg class="ic"><use href="#i-revolve"/></svg>Revolve1</li>
                    <li class="sub"><svg class="ic"><use href="#i-fillet"/></svg>Fillet1</li>
                    <li class="sub"><svg class="ic"><use href="#i-fillet"/></svg>Fillet2</li>
                    <li class="sub more-in"><svg class="ic"><use href="#i-boss"/></svg>Boss-Extrude1</li>
                    <li class="more-in"><svg class="ic"><use href="#i-part"/></svg>Driven Shaft&lt;1&gt; (Defau</li>
                    <li class="more-in"><svg class="ic"><use href="#i-part"/></svg>Shoe1&lt;1&gt; (Default&lt;&lt;D</li>
                    <li class="more-in"><svg class="ic"><use href="#i-part"/></svg>Shoe1&lt;2&gt; (Default&lt;&lt;D</li>
                    <li class="more-in"><svg class="ic"><use href="#i-part"/></svg>SHoe Lining&lt;1&gt; (Defau</li>
                    <li class="more-in"><svg class="ic"><use href="#i-part"/></svg>SHoe Lining&lt;2&gt; (Defau</li>
                    <li class="more-in"><svg class="ic"><use href="#i-part"/></svg>Friction Lining&lt;1&gt; (Defa</li>
                    <li class="more-in"><svg class="ic"><use href="#i-part"/></svg>Friction Lining&lt;2&gt; (Defa</li>
                </ul>
                <div class="vbar"><i></i></div>
            </div>
            <div class="hbar"><i></i></div>
        </aside>

        <section class="viewport">
            <svg class="model" viewBox="282 148 1638 830">
                <!-- input shaft -->
                <path d="M629 448H1060V648H629z" fill="#fff"/>
                <path d="M629 451H1060V648H629z" fill="url(#shaft)"/>
                <path d="M659 448.500H1060M629 648.500H1060M629.500 448V648" stroke="#000" fill="none"/>
                <path d="M629.500 401.500h29v47h-29zM629.500 646.500h29v48h-29z" fill="#1f0f02" stroke="#000"/>
                <!-- neck fillet -->
                <path d="M1061 448C1078 447 1088 437 1088 424V672C1088 660 1078 649 1061 648z" fill="#fff"/>
                <path d="M1061 552h27V672C1088 660 1078 649 1061 648z" fill="url(#neck)"/>
                <path d="M1061 626C1074 626 1078 610 1078 585L1088 560V672C1088 660 1078 649 1061 648z" fill="#f7dcc4" opacity=".35"/>
                <path d="M1061 451h14c6 12 10 30 10 60v41l-9 20-6-19h-9z" fill="#22130a"/>
                <path d="M1079 451h3c4 20 5 50 5 101l-2 30-7-10c4-50 2-90 1-121z" fill="#c08258"/>
                <path d="M1063 455q6-5 12-5l5 2 1 12h-6q-4-6-12-9z" fill="#ffe9bd"/>
                <path d="M1078 469c5 10 8 26 8 50v30l-7 3v-20l-5-38z" fill="#eba26a"/>
                <path d="M1060.500 449V648" stroke="#000"/>
                <path d="M1060 448.500C1078 447 1088 437 1088 424M1060 648.500C1078 649 1088 660 1088 676" stroke="#000" fill="none"/>
                <!-- output shaft -->
                <path d="M1203 477H1569V620H1203z" fill="#fff"/>
                <path d="M1203 479H1569V618H1203z" fill="url(#teal)"/>
                <path d="M1203 477.500H1569M1203 619.500H1569" stroke="#888"/>
                <path d="M1569.500 478V620" stroke="#000"/>
                <!-- drum -->
                <rect x="1088" y="190" width="115" height="717" rx="9" fill="#fff"/>
                <path d="M1089 290L1097 200V905Q1089 900 1089 894z" fill="url(#rimL)"/>
                <path d="M1194 200Q1201 240 1202 300V894Q1202 900 1194 905z" fill="url(#rimR)"/>
                <path d="M1092 300l3-90 2-8v360h-4z" fill="#1e1309"/>
                <path d="M1092 265l2-48 2 10-1 30z" fill="#ffe9bd"/>
                <path d="M1194 200q4 20 5 65l-3 297h-2z" fill="#1e1309"/>
                <path d="M1097 200H1194V906H1097z" fill="url(#drum)"/>
                <path d="M1096.500 191V906M1194.500 191V906" stroke="#000" stroke-dasharray="22 1"/>
                <rect x="1088.500" y="190.500" width="114" height="716" rx="8" fill="none" stroke="#000"/>
                <path d="M1088.500 200V424M1088.500 676V894" stroke="#fff" stroke-dasharray="2 24"/>
                <!-- mate origin mark -->
                <g stroke="#8b8b8b" fill="#8b8b8b"><path d="M1130 465.500h49" stroke-width="2"/><path d="M1141.500 461v9M1166.500 461v9"/><circle cx="1130" cy="465.500" r="2"/><circle cx="1154" cy="465.500" r="2"/><circle cx="1179" cy="465.500" r="2"/></g>
                <!-- triad -->
                <path d="M333 908V882" stroke="#00c400" stroke-width="4"/><path d="M328.500 884L333 873l4.500 11z" fill="#009a00"/>
                <path d="M335 910h25" stroke="#b80000" stroke-width="4"/><path d="M358 905.500l11 4.500-11 4.500z" fill="#a00000"/>
                <circle cx="333" cy="910" r="4" fill="#0a0aa8"/>
                <text class="axis" x="330" y="867" fill="#2fe82f">Y</text>
                <text class="axis" x="375" y="911" fill="#f55">X</text>
                <text class="viewname" x="293" y="973">*Front</text>
            </svg>
            <div class="flyout"><i class="dot"></i></div>
            <nav class="taskpane">
                <button class="on" aria-label="Home"><svg class="ic"><use href="#i-home"/></svg></button>
                <button aria-label="Design library"><svg class="ic"><use href="#i-books"/></svg></button>
                <button aria-label="File explorer"><svg class="ic"><use href="#i-folder2"/></svg></button>
                <button aria-label="View palette"><svg class="ic"><use href="#i-palette"/></svg></button>
                <button aria-label="Appearances"><svg class="ic"><use href="#i-ball"/></svg></button>
                <button aria-label="Custom properties"><svg class="ic"><use href="#i-prop"/></svg></button>
                <button aria-label="Forum"><svg class="ic"><use href="#i-forum"/></svg></button>
            </nav>
        </section>
    </div>

    <div class="modelrow">
        <div class="navbtns">
            <button aria-label="First"><svg width="12" height="12" viewBox="0 0 12 12"><path d="M2 0v12" stroke="#7b7b96" stroke-width="2"/><path d="M11 0v12L4 6z" fill="#7b7b96"/></svg></button>
            <button aria-label="Back"><svg width="12" height="12" viewBox="0 0 12 12"><path d="M9 0v12L2 6z" fill="#7b7b96"/></svg></button>
            <button aria-label="Forward"><svg width="12" height="12" viewBox="0 0 12 12"><path d="M3 0v12l7-6z" fill="#7b7b96"/></svg></button>
            <button aria-label="Last"><svg width="12" height="12" viewBox="0 0 12 12"><path d="M1 0v12l7-6z" fill="#7b7b96"/><path d="M10 0v12" stroke="#7b7b96" stroke-width="2"/></svg></button>
        </div>
        <nav class="mtabs"><a href="#" class="on">Model</a><a href="#">3D Views</a><a href="#">Motion Study 1</a><a href="#">Motion Study 2</a></nav>
    </div>
</main>

<footer class="status">
    <span class="product">SOLIDWORKS Premium 2020 SP1.0</span>
    <span>Fully Defined</span>
    <span class="mode">Editing Assembly</span>
    <span class="units">MMGS</span>
    <i class="caret up"></i>
    <svg width="17" height="15" viewBox="0 0 17 15"><path d="M1 5l5-4 10 5-4 6-4 2-7-5z" fill="#ddd" stroke="#333"/><path d="M1 5l9 5 6-4M10 10l-2 4M5 4l5 3" fill="none" stroke="#333"/></svg>
</footer>

<div class="taskbar">
    <div class="widget">
        <svg width="34" height="32" viewBox="0 0 34 32"><path d="M2 26l8-9 6 6" fill="none" stroke="#1d7a1d" stroke-width="5"/><path d="M12 26l6-4 8-7" fill="none" stroke="#5cc613" stroke-width="5"/><path d="M18 14h9v12h-5z" fill="#5cc613"/><circle cx="23" cy="11" r="10" fill="#f98f98"/><text x="19" y="16" font-size="13" fill="#222">1</text></svg>
        <div>GOOG<br><span class="gain">+2.82%</span></div>
    </div>
    <div class="apps">
        <button class="app" aria-label="Start"><svg width="30" height="30" viewBox="0 0 30 30"><path d="M0 0h14.300v14.300H0zM15.700 0H30v14.300H15.700zM0 15.700h14.300V30H0zM15.700 15.700H30V30H15.700z" fill="url(#winBlue)"/></svg></button>
        <label class="search">
            <svg width="20" height="20" viewBox="0 0 20 20"><circle cx="8.500" cy="8" r="6.800" fill="#555" stroke="#eee" stroke-width="2"/><path d="M13 13l5.500 6" stroke="#eee" stroke-width="2"/></svg>
            <input type="text" placeholder="Search" aria-label="Search">
            <svg width="68" height="34" viewBox="0 0 68 34"><path d="M0 33c2-8 8-11 18-10 10-3 22 4 30 0 8-2 14 1 19-1 1 6-5 11-12 11z" fill="#a8692c"/><path d="M0 33c10-3 50-5 66-4l-9 4z" fill="#c98a42"/><path d="M15 17c-6-2-9 0-9 6 6 1 10-1 12-5zM24 17c6-2 9 2 8 6-5 0-8-2-9-5z" fill="#57b52b"/><path d="M16 16h12c2 4 0 9-2 13h-7c-4-4-5-9-3-13z" fill="#4a3560"/><g fill="#f06a9b"><circle cx="16" cy="8" r="5.500"/><circle cx="22" cy="5" r="5"/><circle cx="26" cy="9" r="5"/><circle cx="23" cy="14" r="5"/><circle cx="16" cy="14" r="5"/></g><circle cx="20" cy="10" r="2.500" fill="#a6123c"/><path d="M55 9L45 20" stroke="#ccd" stroke-width="3"/><path d="M37 27l2-10 10 6-6 5z" fill="#cdd8de"/><path d="M61 4l-8 8" stroke="#2da0ee" stroke-width="6" stroke-linecap="round"/></svg>
        </label>
        <button class="app" aria-label="Task view"><svg width="32" height="30" viewBox="0 0 32 30"><path d="M1 9h22v20H1z" fill="#666"/><path d="M8 1h23v20H8z" fill="#eee"/><path d="M8 9h15v12H8z" fill="#bbb"/></svg></button>
        <button class="app" aria-label="Chat"><svg width="30" height="30" viewBox="0 0 30 30"><path d="M2 29V14a13 13 0 1 1 14 14z" fill="url(#chatG)"/><path d="M7 9h11v11H7zM19 13l4-4v11l-4-4z" fill="#fff"/></svg></button>
        <button class="app" aria-label="Support"><svg width="26" height="26" viewBox="0 0 26 26"><circle cx="13" cy="13" r="11.500" fill="#0e84d4" stroke="#f4f4f4" stroke-width="2"/><path d="M9 17l7-7" stroke="#fff" stroke-width="3"/><path d="M20 8a4 4 0 1 1-4-3l-1 3 2 2zM6 18a3 3 0 1 1 3 3l1-3z" fill="#fff"/></svg></button>
        <button class="app" aria-label="Edge"><svg width="30" height="30" viewBox="0 0 30 30"><path d="M1 13C3-4 28-4 29 12c0 5-5 6-9 5 2-5-2-8-6-8C8 8 3 10 1 13z" fill="url(#edgeG)"/><path d="M1 13c2-5 8-7 13-5-5 3-6 14 2 17 5 2 9 0 11-2-5 8-14 7-18 5C3 25 0 19 1 13z" fill="#1a78cc"/><path d="M13 11c-4 8 2 15 14 12-4 7-12 7-16 3-4-5-2-12 2-15z" fill="#0f4f9a"/></svg></button>
        <button class="app" aria-label="Store"><svg width="30" height="30" viewBox="0 0 30 30"><path d="M8 6V2h14v4" fill="none" stroke="#32b6ee" stroke-width="2.400"/><path d="M1 6h28v20q0 4-4 4H5q-4 0-4-4z" fill="#f3f3f3"/><path d="M9 12h5.500v5.500H9z" fill="#f1511b"/><path d="M15.500 12H21v5.500h-5.500z" fill="#80cc28"/><path d="M9 18.500h5.500V24H9z" fill="#00adef"/><path d="M15.500 18.500H21V24h-5.500z" fill="#fbbc09"/></svg></button>
        <button class="app" aria-label="Explorer"><svg width="30" height="28" viewBox="0 0 30 28"><path d="M0 2q0-2 2-2h8l3 4h15q2 0 2 2v8H0z" fill="#e2a113"/><path d="M0 6h30v21H0z" fill="#fccd48"/><path d="M5 27v-6q0-2 2-2h16q2 0 2 2v6z" fill="#1976c9"/><path d="M9 23h12" stroke="#0c4c8c" stroke-width="1.500"/></svg></button>
        <button class="app active" aria-label="SolidWorks"><svg width="34" height="30" viewBox="0 0 34 30"><path d="M2 5l14-5 13 5v20l-13 5-14-6z" fill="#e0202a"/><path d="M17 9l12-4v20l-12 5z" fill="#8c0e14"/><text x="5" y="20" font-size="15" font-weight="700" fill="#fff">S</text><text x="15" y="19" font-size="13" font-weight="700" fill="#fff">W</text><text x="12" y="29" font-size="8" font-weight="700" fill="#fff">2020</text></svg></button>
    </div>
    <div class="tray">
        <svg width="16" height="10" viewBox="0 0 16 10"><path d="M1 9l7-7 7 7" fill="none" stroke="#fff" stroke-width="1.800"/></svg>
        <svg class="cloud" width="20" height="18" viewBox="0 0 20 18"><path d="M1 13c-1-4 2-6 4-6 1-5 8-6 10-1 4 0 5 7 1 8H3z" fill="#b5b5b5"/><circle cx="14" cy="12" r="5.500" fill="#fbe200"/><path d="M14 9v4M14 14v1.500" stroke="#222" stroke-width="1.400"/></svg>
        <div class="lang">ENG<br>IN</div>
        <svg width="21" height="20" viewBox="0 0 21 20" fill="none" stroke="#fff" stroke-width="1.300"><circle cx="10" cy="10" r="9"/><ellipse cx="10" cy="10" rx="4" ry="9"/><path d="M2 6.500h16M2 13.500h8"/><circle cx="15" cy="14.500" r="5" fill="#202024"/><path d="M12 18l6-7"/></svg>
        <svg width="21" height="18" viewBox="0 0 21 18" fill="none" stroke="#fff" stroke-width="1.400"><path d="M1 6.500h3L9 2v14l-5-4.500H1zM12 6q2 3 0 6M14.500 4q4 5 0 10M17 2q5 7 0 14"/></svg>
        <svg width="20" height="14" viewBox="0 0 20 14"><rect x="1" y="1" width="16" height="11.500" rx="3" fill="none" stroke="#fff" stroke-width="1.500"/><path d="M3 3.500h4v6.500H3zM18 5h1.500v4H18z" fill="#fff"/></svg>
        <div class="clock">17:26<br>14-04-2023</div>
        <span class="badge">2</span>
    </div>
</div>
</body>
</html>
```

FILE: styles.css
```css
* {
    box-sizing: border-box;
}
body {
    margin: 0;
    height: 100vh;
    display: flex;
    flex-direction: column;
    overflow: hidden;
    background: #f7f7f7;
    color: #1a1a1a;
    font: 14px/24px "Open Sans", "Noto Sans", sans-serif;
}
a {
    color: inherit;
    text-decoration: none;
}
button, input {
    font: inherit;
    color: inherit;
    background: none;
    border: 0;
    padding: 0;
}
.sprite {
    position: absolute;
    width: 0;
    height: 0;
}
.ic {
    width: 18px;
    height: 18px;
    flex: none;
}
.ws {
    width: 14px;
    height: 14px;
}
.caret {      /* drop-down arrow */
    flex: none;
    width: 0;
    border: 3px solid transparent;
    border-top: 4px solid #333;
    border-bottom: 0;
}
.caret.dim {
    border-top-color: #999;
}
.caret.up {
    border-top: 0;
    border-bottom: 4px solid #333;
}
.caret.left {
    border: 4px solid transparent;
    border-right: 5px solid #000;
    border-left: 0;
}
.caret.right {
    border: 4px solid transparent;
    border-left: 5px solid #000;
    border-right: 0;
}
.dot {
    width: 6px;
    height: 6px;
    border-radius: 50%;
    background: #ccc;
    border: 1px solid #888;
}

/* title bar */
.titlebar {
    display: flex;
    align-items: center;
    height: 33px;
    padding: 0 6px 0 10px;
    border-bottom: 1px solid #808080;
    font-size: 13px;
}
.logo {
    align-self: flex-start;
    position: relative;
    display: flex;
    align-items: center;
    gap: 2px;
    flex: none;
    width: 145px;
    height: 37px;
    padding-left: 5px;
    border: 1px solid #808080;
    border-width: 0 1px 2px;
    background: linear-gradient(160deg, #fff 40%, #d4d4d4);
    color: #d8281e;
    font: italic 17px Lato, sans-serif;
}
.logo svg {
    align-self: flex-start;
}
.logo b {
    font-weight: 900;
}
.menu {
    display: flex;
    gap: 16px;
    margin-left: 28px;
}
.pin {
    margin: 0 4px 0 23px;
}
.quick {
    display: flex;
    align-items: center;
    height: 32px;
    gap: 8px;
    padding-left: 18px;
    border-left: 2px solid #999;
}
.quick button {
    display: flex;
    align-items: center;
    gap: 8px;
}
.quick .select {
    gap: 2px;
    height: 26px;
    padding-right: 2px;
    border: 1px solid #888;
}
.select span {
    display: flex;
    align-items: center;
    height: 24px;
    padding: 0 1px;
    background: #b0b0b0;
    border-right: 1px solid #888;
}
.titlebar h1 {
    flex: 1;
    margin: 0;
    text-align: center;
    font: inherit;
}
.help-search {
    display: flex;
    align-items: center;
    gap: 6px;
    width: 252px;
    height: 29px;
    padding: 0 4px 0 6px;
    border: 1px solid #111;
    background: #e9ebf1;
}
.help-search input {
    flex: 1;
    min-width: 0;
}
.help-search input::placeholder {
    color: #555;
    opacity: 1;
}
.winctl {
    display: flex;
    align-items: center;
    gap: 12px;
    padding-left: 9px;
}
.winctl button {
    display: flex;
    align-items: center;
    gap: 8px;
}
.winctl .q {
    font-size: 18px;
    font-weight: 700;
    color: #333;
}

/* command manager */
.ribbon {
    display: flex;
    height: 87px;
    border-bottom: 1px solid #808080;
    font-size: 13px;
}
.cmd {
    display: flex;
    flex-direction: column;
    align-items: center;
    gap: 2px;
    padding: 19px 5px 0;
    text-align: center;
    white-space: nowrap;
    line-height: 19px;
}
.cmd.top {
    padding-top: 11px;
}
.cmd.top .caret {
    margin-top: 19px;
}
.cmd.wide {
    width: 94px;
}
.cmd:disabled {
    color: #bbb;
}
.sep {
    width: 1px;
    margin: 6px 1px 3px 0;
    background: #c4c4c4;
}
.more {
    margin-left: auto;
    padding-right: 2px;
    font-size: 16px;
}

/* workspace */
.workspace {
    flex: 1;
    min-height: 0;
    display: flex;
    flex-direction: column;
    background:
        linear-gradient(to left, rgba(255, 255, 255, .4), transparent 20%),
        radial-gradient(ellipse 64% 58% at 15% 0, #fff 50%, transparent),
        linear-gradient(#e3e6ef, #dadeea 48%, #dee2ed 55%, #f0f1f6 61%, #fdfdfe 69%, #fdfdfe 88%, #f3f4f8);
}
.tabrow {
    display: flex;
    height: 28px;
}
.tabs {
    display: flex;
    line-height: 27px;
}
.tabs a {
    padding: 0 9px 0 10px;
    background: #d2d2d2;
    border-right: 1px solid #808080;
    border-bottom: 1px solid #808080;
    color: #333;
    white-space: nowrap;
}
.tabs .on {
    background: #f7f7f7;
    border-bottom-color: #f7f7f7;
    font-weight: 700;
}
.tabs .on ~ a {
    padding: 0 14px;
}
.headsup {
    display: flex;
    align-items: center;
    gap: 8px;
    margin-left: 180px;
}
.docctl {
    display: flex;
    align-items: center;
    gap: 12px;
    margin: 0 12px 0 auto;
}
.stage {
    flex: 1;
    min-height: 0;
    display: flex;
}
.sidebar {
    display: flex;
    flex-direction: column;
    gap: 8px;
    width: 51px;
    padding: 4px 0 0 7px;
    background: #f7f7f7;
}
.grip {
    height: 4px;
    border-top: 2px dotted #999;
}
.sidebar hr {
    width: 42px;
    height: 1px;
    margin: -1px 0 0;
    border: 0;
    background: #888;
}
.sidebar hr + hr {
    margin-top: 4px;
}
.grey {
    fill: #e8e8e8;
    stroke: #bdbdbd;
}
.withcaret {
    display: flex;
    align-items: center;
    gap: 13px;
}

/* feature manager panel */
.panel {
    display: flex;
    flex-direction: column;
    width: 231px;
    border-left: 1px solid #bbb;
    border-right: 1px solid #808080;
    background: #f7f7f7;
}
.splitter {
    display: flex;
    align-items: center;
    justify-content: center;
    height: 22px;
    margin: 3px 2px 0 0;
    border: 1px solid #c4c4c4;
    border-width: 1px 0;
}
.ptabs {
    display: flex;
    height: 26px;
    margin: 4px 2px 0 0;
    border-top: 1px solid #808080;
}
.ptabs button {
    width: 40px;
    background: #d2d2d2;
    border: 1px solid #808080;
    border-width: 0 1px 1px 0;
    line-height: 0;
}
.ptabs .on {
    background: #f7f7f7;
    border-bottom: 0;
}
.ptabs .cut {
    width: 22px;
    overflow: hidden;
    padding-left: 8px;
}
.ptabs .arrow {
    display: flex;
    align-items: center;
    justify-content: center;
    flex: 1;
    background: #fff;
}
.filter {
    display: flex;
    align-items: center;
    gap: 2px;
    height: 32px;
    margin: 1px 6px 0 4px;
    padding-left: 2px;
    border: 1px solid #bbb;
}
.filter input {
    flex: 1;
    min-width: 0;
}
.treebox {
    flex: 1;
    min-height: 0;
    display: flex;
}
.tree {
    flex: 1;
    margin: 0;
    padding: 0;
    list-style: none;
    overflow: hidden;
}
.tree li {
    position: relative;
    display: flex;
    align-items: center;
    gap: 5px;
    height: 24px;
    padding-left: 26px;
    white-space: pre;
}
.tree .root {
    padding-left: 4px;
    gap: 4px;
}
.tree .sub {
    padding-left: 49px;
}
.tree .a {
    font: 700 12px "Liberation Serif", serif;
    fill: #1f6a92;
}
.more-in::before, .open::before {      /* expand arrow over the row's indent */
    content: "";
    position: absolute;
    left: 9px;
    border: 4px solid transparent;
    border-left: 5px solid #555;
    border-right: 0;
}
.open::before {
    left: 7px;
    border: 4px solid transparent;
    border-top: 5px solid #555;
    border-bottom: 0;
}
.sub::before {
    left: 32px;
}
.vbar {
    width: 20px;
    padding: 20px 5px 0 7px;
    background: #efefef;
}
.vbar i {
    display: block;
    height: 85%;
    width: 6px;
    background: #868686;
}
.hbar {
    height: 22px;
    margin-bottom: 3px;
    padding: 7px 0 0 21px;
    background: #efefef;
    border-bottom: 1px solid #c4c4c4;
}
.hbar i {
    display: block;
    width: 71px;
    height: 6px;
    background: #868686;
}

/* graphics area */
.viewport {
    position: relative;
    flex: 1;
    min-width: 0;
}
.model {
    display: block;
    width: 100%;
    height: 100%;
}
.viewname {
    font-size: 17px;
}
.axis {
    font-size: 11px;
}
.flyout {
    position: absolute;
    left: 0;
    top: 376px;
    display: flex;
    align-items: center;
    justify-content: center;
    width: 11px;
    height: 49px;
    background: #f7f7f7;
    border: 1px solid #808080;
    border-left: 0;
}
.taskpane {
    position: absolute;
    right: 0;
    top: 55px;
    width: 33px;
    border: 1px solid #808080;
    border-right: 0;
}
.taskpane button {
    display: flex;
    align-items: center;
    justify-content: center;
    width: 100%;
    height: 30px;
    background: #d2d2d2;
    border-bottom: 1px solid #808080;
}
.taskpane .on {
    background: #f7f7f7;
}
.taskpane button:last-child {
    border-bottom: 0;
}

/* model tabs */
.modelrow {
    display: flex;
    height: 22px;
    padding-left: 78px;
    background: #f7f7f7;
    border-top: 1px solid #808080;
    border-bottom: 1px solid #808080;
    font-size: 15px;
}
.navbtns {
    display: flex;
}
.navbtns button {
    width: 20px;
    background: #a9a9c0;
    border: 1px solid #8080a0;
    line-height: 0;
}
.mtabs {
    display: flex;
    line-height: 19px;
}
.mtabs a {
    padding: 0 13px;
    background: #d2d2d2;
    border: 1px solid #808080;
    border-width: 0 1px 0 0;
}
.mtabs .on {
    padding: 0 15px;
    background: #fff;
    color: #000;
    font-weight: 700;
}
.mtabs a:last-child {
    padding-right: 24px;
}

.status {
    display: flex;
    align-items: center;
    height: 20px;
    padding: 1px 2px 0 0;
    background: #f7f7f7;
    line-height: 18px;
}
.product {
    margin-right: auto;
    padding-left: 1px;
}
.mode {
    margin: 0 124px 0 21px;
}
.units {
    margin-right: 27px;
}
.status svg {
    margin-left: 27px;
}

/* taskbar */
.taskbar {
    display: grid;
    grid-template-columns: 1fr auto 1fr;
    align-items: center;
    height: 60px;
    border-top: 1px solid #444;
    background: linear-gradient(to right, #201f26, #1f1e29 30%, #1c2136 58%, #202236 68%, #33201f 72%, #2c2026 78%, #1e2133 84%, #202020 93%);
    color: #fff;
    font-size: 15px;
    line-height: 20px;
}
.widget {
    display: flex;
    align-items: center;
    gap: 4px;
    padding-left: 26px;
}
.gain {
    color: #6ccb5f;
}
.apps {
    display: flex;
    align-items: center;
    gap: 5px;
}
.app {
    display: flex;
    align-items: center;
    justify-content: center;
    width: 50px;
    height: 50px;
}
.active {
    position: relative;
    background: #2f3038;
    border: 1px solid #3b3c44;
    border-radius: 5px;
}
.active::after {      /* running indicator */
    content: "";
    position: absolute;
    bottom: 1px;
    width: 20px;
    height: 4px;
    border-radius: 2px;
    background: #f4826b;
}
.search {
    display: flex;
    align-items: center;
    gap: 12px;
    width: 274px;
    height: 40px;
    padding: 0 6px 0 14px;
    border: 1px solid #55555d;
    border-radius: 20px;
    background: #3e3e45;
}
.search input {
    flex: 1;
    min-width: 0;
    font-size: 16px;
}
.search input::placeholder {
    color: #ccc;
    opacity: 1;
}
.tray {
    display: flex;
    align-items: center;
    justify-content: flex-end;
    gap: 10px;
    padding-right: 25px;
}
.cloud {
    margin-left: 13px;
}
.lang {
    padding: 0 12px;
    text-align: center;
}
.clock {
    margin-left: 8px;
    text-align: right;
}
.badge {
    width: 20px;
    border-radius: 50%;
    background: #f4826b;
    color: #222;
    text-align: center;
    font-size: 13px;
}
```
